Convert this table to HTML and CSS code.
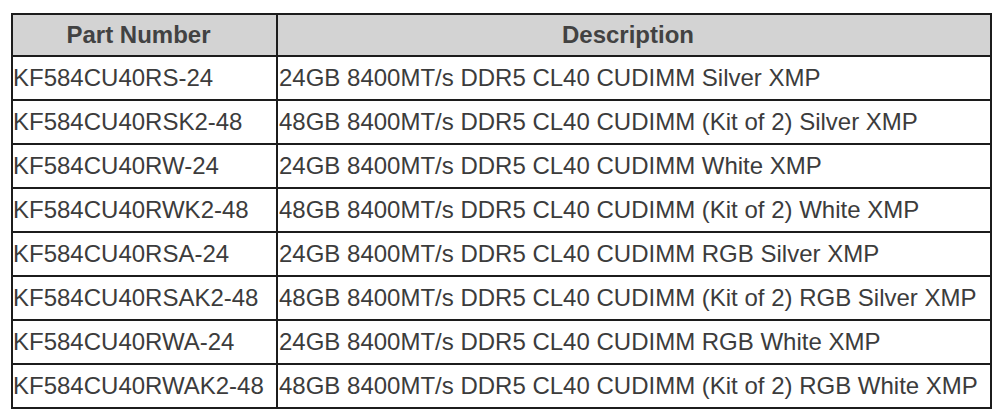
FILE: index.html
```html
<!DOCTYPE html>
<html>
<head>
<meta charset="utf-8">
<link rel="stylesheet" href="styles.css">
</head>
<body>
<table class="parts">
  <colgroup><col class="c1"><col class="c2"></colgroup>
  <thead>
    <tr><th>Part Number</th><th>Description</th></tr>
  </thead>
  <tbody>
    <tr><td>KF584CU40RS-24</td><td>24GB 8400MT/s DDR5 CL40 CUDIMM Silver XMP</td></tr>
    <tr><td>KF584CU40RSK2-48</td><td>48GB 8400MT/s DDR5 CL40 CUDIMM (Kit of 2) Silver XMP</td></tr>
    <tr><td>KF584CU40RW-24</td><td>24GB 8400MT/s DDR5 CL40 CUDIMM White XMP</td></tr>
    <tr><td>KF584CU40RWK2-48</td><td>48GB 8400MT/s DDR5 CL40 CUDIMM (Kit of 2) White XMP</td></tr>
    <tr><td>KF584CU40RSA-24</td><td>24GB 8400MT/s DDR5 CL40 CUDIMM RGB Silver XMP</td></tr>
    <tr><td>KF584CU40RSAK2-48</td><td>48GB 8400MT/s DDR5 CL40 CUDIMM (Kit of 2) RGB Silver XMP</td></tr>
    <tr><td>KF584CU40RWA-24</td><td>24GB 8400MT/s DDR5 CL40 CUDIMM RGB White XMP</td></tr>
    <tr><td>KF584CU40RWAK2-48</td><td>48GB 8400MT/s DDR5 CL40 CUDIMM (Kit of 2) RGB White XMP</td></tr>
  </tbody>
</table>
</body>
</html>
```
FILE: styles.css
```css
html, body {
  margin: 0;
  padding: 0;
  background: #ffffff;
}
.parts {
  margin: 13px 0 0 11px;
  width: 979px;
  border-collapse: separate;
  border-spacing: 0;
  border-top: 2px solid #1c1c1c;
  border-left: 2px solid #1c1c1c;
  table-layout: fixed;
  font-family: "Liberation Sans", Arial, sans-serif;
  font-size: 24px;
  color: #3c3c3c;
}
.c1 { width: 265px; }
.c2 { width: 714px; }
.parts th,
.parts td {
  box-sizing: border-box;
  border-right: 2px solid #1c1c1c;
  border-bottom: 2px solid #1c1c1c;
  padding: 0 0 0 1px;
  vertical-align: middle;
  white-space: nowrap;
  line-height: 28px;
  text-align: left;
}
.parts th {
  background: #d3d3d3;
  font-weight: bold;
  text-align: center;
  color: #424242;
  height: 42px;
  padding: 0 12px 0 0;
}
.parts td {
  height: 44px;
}
.parts td:first-child {
  padding-left: 0;
}
```
